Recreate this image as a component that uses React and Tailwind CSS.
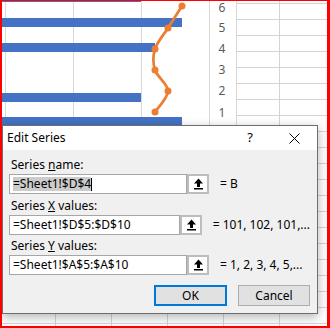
import React from 'react'

// chart points of the orange series (secondary axis)
const points = [[182, 6], [168, 28], [155, 49], [155, 70], [168, 91], [155, 112]]

function smoothPath(pts) {
  let d = `M${pts[0][0]},${pts[0][1]}`
  for (let i = 0; i < pts.length - 1; i++) {
    const p0 = pts[i - 1] || pts[i]
    const p1 = pts[i]
    const p2 = pts[i + 1]
    const p3 = pts[i + 2] || p2
    const c1x = p1[0] + (p2[0] - p0[0]) / 6
    const c1y = p1[1] + (p2[1] - p0[1]) / 6
    const c2x = p2[0] - (p3[0] - p1[0]) / 6
    const c2y = p2[1] - (p3[1] - p1[1]) / 6
    d += ` C${c1x},${c1y} ${c2x},${c2y} ${p2[0]},${p2[1]}`
  }
  return d
}

// Sheet + chart behind the dialog
function Background() {
  const rows = Array.from({ length: 21 }, (_, i) => 3 + i * 16)
  const cols = [55, 111, 167, 223, 279]
  const bars = [
    { y: -7, w: 141 },
    { y: 18, w: 182 },
    { y: 43, w: 155 },
    { y: 93, w: 141 },
    { y: 117, w: 182 },
  ]
  const labels = [['6', 7], ['5', 27], ['4', 48], ['3', 69], ['2', 90], ['1', 112]]

  return (
    <svg width="330" height="328" className="absolute left-0 top-0">
      <rect width="330" height="328" fill="#ffffff" />
      {rows.map(y => (
        <line key={'r' + y} x1="0" x2="330" y1={y + 0.5} y2={y + 0.5} stroke="#d4d4d4" />
      ))}
      {cols.map(x => (
        <line key={'c' + x} x1={x + 0.5} x2={x + 0.5} y1="0" y2="328" stroke="#d4d4d4" />
      ))}
      {/* chart area */}
      <rect x="-2" y="-2" width="238.5" height="306" fill="#ffffff" stroke="#d9d9d9" />
      {[5, 73, 141, 209].map(x => (
        <line key={'g' + x} x1={x + 0.5} x2={x + 0.5} y1="0" y2="300" stroke="#d9d9d9" />
      ))}
      {bars.map(b => (
        <rect key={b.y} x="0" y={b.y} width={b.w} height="9" fill="#4472c4" />
      ))}
      <path d={smoothPath(points)} fill="none" stroke="#ed7d31" strokeWidth="2.75" strokeLinecap="round" />
      {points.map(([x, y]) => (
        <circle key={y} cx={x} cy={y} r="3.5" fill="#ed7d31" />
      ))}
      {labels.map(([t, y]) => (
        <text key={t} x="222" y={y + 4.5} textAnchor="middle" fontSize="12" fill="#595959" fontFamily="Noto Sans, sans-serif">
          {t}
        </text>
      ))}
    </svg>
  )
}

function UpIcon() {
  return (
    <svg width="11" height="12" viewBox="0 0 11 12">
      <path d="M5.5 0.5 L10 5.5 L7 5.5 L7 9 L4 9 L4 5.5 L1 5.5 Z" fill="#000" />
      <rect x="1" y="10" width="9" height="1.5" fill="#000" />
    </svg>
  )
}

function RefRow({ children, value }) {
  return (
    <div className="flex items-center h-[20px]">
      <div className="w-[178px] h-full border border-[#a6a6a6] bg-white flex items-center pl-[3px] text-[12px] text-black overflow-hidden whitespace-nowrap">
        {children}
      </div>
      <div className="w-[22px] h-full border-2 border-[#bdbdbd] bg-white flex items-center justify-center">
        <UpIcon />
      </div>
      <span className="ml-[11px] text-[12px] text-black whitespace-nowrap">{value}</span>
    </div>
  )
}

function EditSeriesDialog() {
  return (
    <div className="absolute left-[2px] top-[125px] w-[316px] h-[189px] border border-[#6e6e6e] bg-[#f0f0f0] shadow-[0_3px_10px_rgba(0,0,0,0.3)] flex flex-col">
      <div className="h-[24px] bg-white flex items-center pl-[4px] text-[12px] text-black">
        <span>Edit Series</span>
        <span className="ml-auto mr-[36px] text-[13px]">?</span>
        <svg width="11" height="11" viewBox="0 0 11 11" className="mr-[17px]">
          <path d="M0.5 0.5 L10.5 10.5 M10.5 0.5 L0.5 10.5" stroke="#000" strokeWidth="1" />
        </svg>
      </div>
      <div className="flex flex-col pl-[6px] pr-[7px] pt-[7px]">
        <div className="h-[16px] leading-[16px] pl-[2px] text-[12px]">
          Series <span className="underline">n</span>ame:
        </div>
        <div className="mt-[1px]">
          <RefRow value="= B">
            <span className="bg-[#cccccc] leading-[14px]">=Sheet1!$D$4</span>
            <span className="w-px h-[13px] bg-black" />
          </RefRow>
        </div>
        <div className="mt-[4px] h-[16px] leading-[16px] pl-[2px] text-[12px]">
          Series <span className="underline">X</span> values:
        </div>
        <div className="mt-[1px]">
          <RefRow value="= 101, 102, 101,...">=Sheet1!$D$5:$D$10</RefRow>
        </div>
        <div className="mt-[3px] h-[16px] leading-[16px] pl-[2px] text-[12px]">
          Series <span className="underline">Y</span> values:
        </div>
        <div className="mt-[1px]">
          <RefRow value="= 1, 2, 3, 4, 5,...">=Sheet1!$A$5:$A$10</RefRow>
        </div>
        <div className="mt-[10px] flex justify-end gap-[11px]">
          <button className="w-[73px] h-[21px] border-2 border-[#0078d7] bg-[#e1e1e1] text-[12px] text-black">OK</button>
          <button className="w-[72px] h-[21px] border border-[#adadad] bg-[#e1e1e1] text-[12px] text-black">Cancel</button>
        </div>
      </div>
    </div>
  )
}

export default function App() {
  return (
    <div className="relative w-[330px] h-[328px] overflow-hidden bg-white font-['Noto_Sans',sans-serif]">
      <Background />
      <EditSeriesDialog />
      {/* red frame around the capture */}
      <div className="absolute inset-0 border-t border-l-2 border-r-[3px] border-b-2 border-[#ff0000] pointer-events-none" />
    </div>
  )
}
